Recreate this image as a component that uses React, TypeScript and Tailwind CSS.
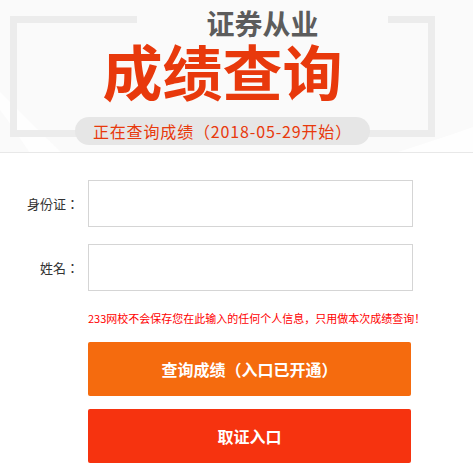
import React from 'react';

const FONT = { fontFamily: '"Noto Sans CJK SC", "Noto Sans", sans-serif' };
const LABEL_FONT = { fontFamily: '"Noto Sans CJK JP", "Noto Sans CJK SC", sans-serif' };

const Header: React.FC = () => (
  <div className="relative h-[153px] overflow-hidden border-b border-[#e8e8e8] bg-[#fafafa] pl-[10px] pt-[16px]">
    {/* faint swooshes in the background */}
    <svg className="absolute inset-0" width="473" height="153" viewBox="0 0 473 153">
      <path d="M0 92 C 20 112, 40 132, 62 153 L 30 153 C 18 136, 8 120, 0 110 Z" fill="#ffffff" opacity="0.7" />
      <path d="M395 153 C 420 145, 448 136, 473 127 L 473 153 Z" fill="#ffffff" opacity="0.8" />
    </svg>
    <div className="relative w-[425px] border-[7px] border-[#ececec]">
      <div className="-mt-[15px] ml-[120px] w-[251px] bg-[#fafafa] text-center text-[28px] font-bold leading-[30px] text-[#5c5c5c]">
        证券从业
      </div>
      <div className="text-center text-[60px] font-bold leading-[64px] text-[#e8390c]">成绩查询</div>
      <div className="mx-auto -mb-[15px] mt-[15px] flex h-[28px] w-[295px] items-center justify-center rounded-full bg-[#e6e6e6] text-[16px] tracking-[0.85px] text-[#e8390c]">
        正在查询成绩（2018-05-29开始）
      </div>
    </div>
  </div>
);

const Field: React.FC<{ label: string }> = ({ label }) => (
  <div className="flex items-center">
    <label className="w-[79px] text-right text-[13px] text-[#333333]" style={LABEL_FONT}>
      {label}
    </label>
    <input className="ml-[9px] h-[47px] w-[325px] border border-[#d5d5d5] bg-white px-2 text-[14px] outline-none" />
  </div>
);

export default function App() {
  return (
    <div className="h-[473px] w-[473px] overflow-hidden bg-white" style={FONT}>
      <Header />
      <div className="pt-[27px]">
        <div className="flex flex-col gap-[17px]">
          <Field label="身份证：" />
          <Field label="姓名：" />
        </div>
        <div className="ml-[88px] mt-[19px] text-[11px] leading-[16px] text-[#ff0000]">
          233网校不会保存您在此输入的任何个人信息，只用做本次成绩查询！
        </div>
        <div className="ml-[88px] mt-[16px] flex w-[323px] flex-col gap-[13px]">
          <button className="h-[54px] rounded-[2px] bg-[#f56b0e] text-[16px] font-bold text-white">
            查询成绩（入口已开通）
          </button>
          <button className="h-[54px] rounded-[2px] bg-[#f6330f] text-[16px] font-bold text-white">
            取证入口
          </button>
        </div>
      </div>
    </div>
  );
}
